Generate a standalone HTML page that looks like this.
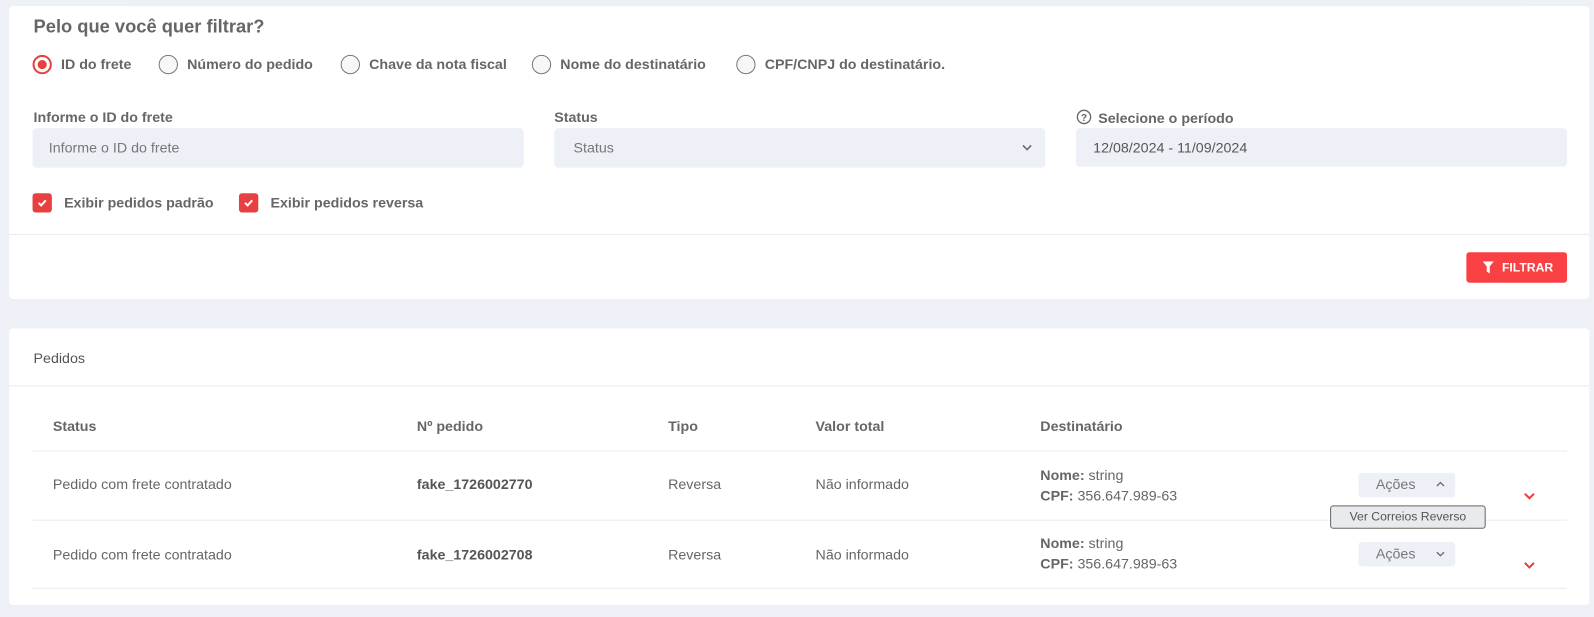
<!DOCTYPE html>
<html><head><meta charset="utf-8"><style>
*{box-sizing:border-box;margin:0;padding:0}
html{width:1594px;height:617px;overflow:hidden;background:#edf0f7}
body{width:1594px;height:617px;background:#edf0f7;font-family:"Liberation Sans",sans-serif;color:#666;position:relative;overflow:hidden}
#w{position:absolute;left:0;top:0;width:1594px;height:617px;transform:scale(1.0169);transform-origin:0 0}
.a{position:absolute;white-space:nowrap}
.card{position:absolute;background:#fff;border-radius:4px}
.b{font-weight:bold}
.radio{position:absolute;width:19px;height:19px;border:1px solid #777;border-radius:50%;background:#f6f7f9}
.radio.on{border:2px solid #e84040;background:#fff}
.radio.on:after{content:"";position:absolute;left:3px;top:3px;width:9px;height:9px;border-radius:50%;background:#e84040}
.inp{position:absolute;background:#edf0f7;border-radius:4px;height:39px}
.cb{position:absolute;width:19px;height:19px;background:#e84040;border-radius:3px}
.line{position:absolute;height:1px;background:#e8ebf1}
.act{position:absolute;width:95px;height:24px;background:#edf0f7;border-radius:3px;font-size:14px;color:#777}
</style></head><body><div id="w">
<div class="card" style="left:9px;top:6px;width:1554px;height:288px"></div>
<div class="card" style="left:9px;top:323px;width:1554px;height:272px"></div>

<div class="a b" style="left:33px;top:16px;font-size:18px;color:#666">Pelo que você quer filtrar?</div>
<div class="radio on" style="left:32px;top:54px"></div><div class="a b" style="left:60px;top:55px;font-size:14px">ID do frete</div>
<div class="radio" style="left:156px;top:54px"></div><div class="a b" style="left:184px;top:55px;font-size:14px">Número do pedido</div>
<div class="radio" style="left:335px;top:54px"></div><div class="a b" style="left:363px;top:55px;font-size:14px">Chave da nota fiscal</div>
<div class="radio" style="left:523px;top:54px"></div><div class="a b" style="left:551px;top:55px;font-size:14px">Nome do destinatário</div>
<div class="radio" style="left:724px;top:54px"></div><div class="a b" style="left:752px;top:55px;font-size:14px">CPF/CNPJ do destinatário.</div>

<div class="a b" style="left:33px;top:107px;font-size:14px">Informe o ID do frete</div>
<div class="inp" style="left:32px;top:126px;width:483px"></div>
<div class="a" style="left:48px;top:137px;font-size:14px;color:#777">Informe o ID do frete</div>

<div class="a b" style="left:545px;top:107px;font-size:14px">Status</div>
<div class="inp" style="left:545px;top:126px;width:483px"></div>
<div class="a" style="left:564px;top:137px;font-size:14px;color:#777">Status</div>
<svg class="a" style="left:1005px;top:141px" width="10" height="8"><path d="M1 2l4 4 4-4" stroke="#666" stroke-width="1.5" fill="none"/></svg>

<svg class="a" style="left:1058px;top:107px" width="16" height="16"><circle cx="8" cy="8" r="6.5" stroke="#666" stroke-width="1.3" fill="none"/><text x="8" y="12" font-size="10" text-anchor="middle" fill="#666" font-family="Liberation Sans" font-weight="bold">?</text></svg>
<div class="a b" style="left:1080px;top:108px;font-size:14px">Selecione o período</div>
<div class="inp" style="left:1058px;top:126px;width:483px;height:38px"></div>
<div class="a" style="left:1075px;top:137px;font-size:14px;color:#555">12/08/2024 - 11/09/2024</div>

<div class="cb" style="left:32px;top:190px"></div><svg class="a" style="left:36px;top:195px" width="11" height="9"><path d="M2 4.5l2.5 2.5 4.5-5" stroke="#fff" stroke-width="2" fill="none"/></svg>
<div class="a b" style="left:63px;top:191px;font-size:14px">Exibir pedidos padrão</div>
<div class="cb" style="left:235px;top:190px"></div><svg class="a" style="left:239px;top:195px" width="11" height="9"><path d="M2 4.5l2.5 2.5 4.5-5" stroke="#fff" stroke-width="2" fill="none"/></svg>
<div class="a b" style="left:266px;top:191px;font-size:14px">Exibir pedidos reversa</div>

<div class="line" style="left:9px;top:230px;width:1554px"></div>
<div class="a" style="left:1442px;top:248px;width:99px;height:30px;background:#f94144;border-radius:3px"></div>
<svg class="a" style="left:1458px;top:257px" width="11" height="12"><path d="M0 0h11L7 5v7L4 10V5z" fill="#fff"/></svg>
<div class="a b" style="left:1477px;top:256px;font-size:12px;color:#fff">FILTRAR</div>

<div class="a" style="left:33px;top:344px;font-size:14px;color:#555">Pedidos</div>
<div class="line" style="left:9px;top:379px;width:1554px"></div>

<div class="a b" style="left:52px;top:411px;font-size:14px">Status</div>
<div class="a b" style="left:410px;top:411px;font-size:14px">Nº pedido</div>
<div class="a b" style="left:657px;top:411px;font-size:14px">Tipo</div>
<div class="a b" style="left:802px;top:411px;font-size:14px">Valor total</div>
<div class="a b" style="left:1023px;top:411px;font-size:14px">Destinatário</div>
<div class="line" style="left:32px;top:443px;width:1509px"></div>

<div class="a" style="left:52px;top:468px;font-size:14px">Pedido com frete contratado</div>
<div class="a b" style="left:410px;top:468px;font-size:14px;color:#555">fake_1726002770</div>
<div class="a" style="left:657px;top:468px;font-size:14px">Reversa</div>
<div class="a" style="left:802px;top:468px;font-size:14px">Não informado</div>
<div class="a" style="left:1023px;top:459px;font-size:14px"><b>Nome:</b> string</div>
<div class="a" style="left:1023px;top:479px;font-size:14px"><b>CPF:</b> 356.647.989-63</div>
<div class="act" style="left:1336px;top:465px"><span class="a" style="left:17px;top:3px">Ações</span><svg class="a" style="left:76px;top:8px" width="9" height="6"><path d="M1 5l3.5-3.5L8 5" stroke="#666" stroke-width="1.3" fill="none"/></svg></div>
<svg class="a" style="left:1498px;top:484px" width="12" height="8"><path d="M1.5 1.5l4.5 4.5 4.5-4.5" stroke="#e84040" stroke-width="2" fill="none"/></svg>
<div class="line" style="left:32px;top:511px;width:1509px"></div>
<div class="a" style="left:1308px;top:497px;width:153px;height:23px;background:#e8eaee;border:1px solid #666;border-radius:3px;font-size:12px;color:#555;text-align:center;line-height:21px">Ver Correios Reverso</div>

<div class="a" style="left:52px;top:537px;font-size:14px">Pedido com frete contratado</div>
<div class="a b" style="left:410px;top:537px;font-size:14px;color:#555">fake_1726002708</div>
<div class="a" style="left:657px;top:537px;font-size:14px">Reversa</div>
<div class="a" style="left:802px;top:537px;font-size:14px">Não informado</div>
<div class="a" style="left:1023px;top:526px;font-size:14px"><b>Nome:</b> string</div>
<div class="a" style="left:1023px;top:546px;font-size:14px"><b>CPF:</b> 356.647.989-63</div>
<div class="act" style="left:1336px;top:533px"><span class="a" style="left:17px;top:3px">Ações</span><svg class="a" style="left:76px;top:9px" width="9" height="6"><path d="M1 1l3.5 3.5L8 1" stroke="#666" stroke-width="1.3" fill="none"/></svg></div>
<svg class="a" style="left:1498px;top:552px" width="12" height="8"><path d="M1.5 1.5l4.5 4.5 4.5-4.5" stroke="#e84040" stroke-width="2" fill="none"/></svg>
<div class="line" style="left:32px;top:578px;width:1509px"></div>
</div></body></html>
